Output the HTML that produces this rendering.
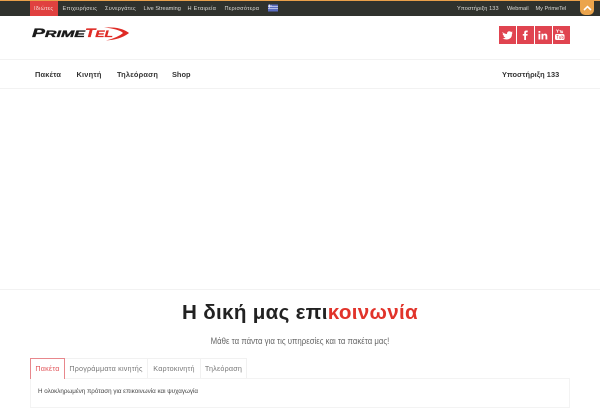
<!DOCTYPE html>
<html lang="el">
<head>
<meta charset="utf-8">
<title>PrimeTel</title>
<style>
html,body{margin:0;padding:0;background:#fff}
body{width:600px;height:400px;position:relative;overflow:hidden;font-family:"Liberation Sans","DejaVu Sans",sans-serif}
.a{position:absolute;white-space:nowrap}
.top{left:0;top:0;width:600px;height:15.5px;background:#30322d;border-top:1px solid #e9a04a;box-sizing:border-box}
.t{top:1.5px;height:14px;line-height:14px;font-size:5.6px;letter-spacing:.25px;color:#dcdcd8}
.n{top:68.5px;line-height:12px;font-size:7.4px;font-weight:bold;letter-spacing:.2px;color:#333}
.s{top:26px;width:17.2px;height:18px;background:#e04450}
.l{left:0;width:600px;height:1px;background:#f2f2f2}
.tab{top:358px;height:20px;line-height:20px;font-size:7.2px;color:#777;text-align:center;box-sizing:border-box;border:1px solid #f1f1f1;border-bottom:0;border-left:0;letter-spacing:.2px}
</style>
</head>
<body>
<div class="a top"></div>
<div class="a" style="left:30px;top:1px;width:28px;height:14.5px;background:#e0413f"></div>
<div class="a t" style="left:34px;color:#f6dcd8">Ιδιώτες</div>
<div class="a t" style="left:62.5px">Επιχειρήσεις</div>
<div class="a t" style="left:105px">Συνεργάτες</div>
<div class="a t" style="left:143.5px;letter-spacing:0">Live Streaming</div>
<div class="a t" style="left:187.5px">Η Εταιρεία</div>
<div class="a t" style="left:224.5px">Περισσότερα</div>
<svg class="a" style="left:268px;top:4px" width="10" height="8" viewBox="0 0 10 8"><rect width="10" height="7" y=".5" fill="#5a6cc0"/><rect y="2" width="10" height=".8" fill="#c9cfee"/><rect y="4" width="10" height=".8" fill="#c9cfee"/><rect x="1" y=".5" width="1" height="3" fill="#e4e7f7"/><rect y="1.6" width="4" height=".8" fill="#e4e7f7"/></svg>
<div class="a t" style="left:457px;letter-spacing:.1px">Υποστήριξη 133</div>
<div class="a t" style="left:507px;letter-spacing:0">Webmail</div>
<div class="a t" style="left:535.5px;letter-spacing:0">My PrimeTel</div>
<div class="a" style="left:580px;top:0;width:14px;height:14.5px;background:#eba44c;border-radius:0 0 5px 5px"></div>
<svg class="a" style="left:582.5px;top:4.5px" width="9" height="6" viewBox="0 0 9 6"><path d="M1 5 L4.500 1.600 L8 5" fill="none" stroke="#fff" stroke-width="1.600"/></svg>

<svg class="a" style="left:30px;top:25px" width="100" height="17" viewBox="0 0 100 17">
<text x="2" y="12" font-family="Liberation Sans" font-weight="bold" font-style="italic" fill="#1b1b1b" stroke="#1b1b1b" stroke-width=".35" textLength="53" lengthAdjust="spacingAndGlyphs"><tspan font-size="11.500">P</tspan><tspan font-size="9.500">RIME</tspan></text>
<text x="55" y="12" font-family="Liberation Sans" font-weight="bold" font-style="italic" fill="#df2b25" stroke="#df2b25" stroke-width=".3" textLength="28" lengthAdjust="spacingAndGlyphs"><tspan font-size="11.500">T</tspan><tspan font-size="9.500">EL</tspan></text>
<path d="M74 2.500 Q91 1.500 99 8 Q91 14.500 76 15.500 Q88 12.500 93 8 Q89 4 74 2.500Z" fill="#df2b25"/>
</svg>

<div class="a s" style="left:498.500px"></div>
<div class="a s" style="left:516.500px"></div>
<div class="a s" style="left:534.500px"></div>
<div class="a s" style="left:552.500px"></div>
<svg class="a" style="left:498px;top:26px" width="72" height="18" viewBox="0 0 72 18">
<path d="M4.500 6 Q6.500 8 9 8 Q9 5.200 11.500 5.200 Q12.700 5.200 13 6 L14.500 5.500 L13.800 6.900 L14.800 6.700 L14 7.800 Q14 13.500 8.500 13.500 Q6 13.500 4.300 12.300 Q6.300 12.500 7.500 11.400 Q5.800 11.200 5.400 9.900 L6.300 9.800 Q4.700 9.200 4.700 7.700 L5.600 7.900 Q4.200 7 4.500 6Z" fill="#fff"/>
<path d="M26.200 14 V9.600 H24.800 V8 H26.200 V6.600 Q26.200 4.500 28.400 4.500 H29.700 V6.200 H28.800 Q28 6.200 28 7 V8 H29.700 L29.400 9.600 H28 V14Z" fill="#fff"/>
<path d="M40.500 7.800 H42.300 V13.500 H40.500Z M40.500 5 H42.300 V6.700 H40.500Z M43.500 7.800 H45.300 V8.600 Q45.900 7.600 47.200 7.600 Q49.300 7.600 49.300 10 V13.500 H47.500 V10.400 Q47.500 9.100 46.500 9.100 Q45.300 9.100 45.300 10.500 V13.500 H43.500Z" fill="#fff"/>
<path d="M58.500 3.500 L59.500 5.500 L60.500 3.500 M59.500 5.500 V6.800 M61.500 4.600 H62.500 V6.800 M63.500 4.600 V6.800 H64.700 V4.600" fill="none" stroke="#fff" stroke-width=".7"/>
<rect x="57" y="8" width="9.500" height="6" rx="1.500" fill="#fff"/>
<path d="M58.500 9.300 H60.500 M59.500 9.300 V12.800 M61.500 10.200 V12.500 H62.800 V10.200 M64 9 V12.500 H65.300 V10.500 H64" fill="none" stroke="#e04450" stroke-width=".5"/>
</svg>

<div class="a l" style="top:59px"></div>
<div class="a l" style="top:88px"></div>
<div class="a n" style="left:35px">Πακέτα</div>
<div class="a n" style="left:76.500px">Κινητή</div>
<div class="a n" style="left:117px">Τηλεόραση</div>
<div class="a n" style="left:172px;letter-spacing:0">Shop</div>
<div class="a n" style="left:502px;letter-spacing:.05px">Υποστήριξη 133</div>

<div class="a l" style="top:289px"></div>
<div class="a" style="left:0;width:600px;top:299px;line-height:28px;text-align:center;font-size:20.600px;font-weight:bold;color:#222;letter-spacing:.3px">Η δική μας επι<span style="color:#e1332a">κοινωνία</span></div>
<div class="a" style="left:0;width:600px;top:333.500px;line-height:14px;text-align:center;font-size:9.300px;color:#666;transform:scaleX(.84)">Μάθε τα πάντα για τις υπηρεσίες και τα πακέτα μας!</div>

<div class="a" style="left:30px;top:378px;width:540px;height:30px;border:1px solid #f3f3f3;box-sizing:border-box"></div>
<div class="a tab" style="left:30px;top:358px;width:35px;height:21px;background:#fff;border:1px solid #e8878c;border-bottom:0;color:#e2555a">Πακέτα</div>
<div class="a tab" style="left:65px;width:83px">Προγράμματα κινητής</div>
<div class="a tab" style="left:148px;width:53px">Καρτοκινητή</div>
<div class="a tab" style="left:201px;width:46px">Τηλεόραση</div>
<div class="a" style="left:38px;top:386px;line-height:12px;font-size:6.250px;color:#444">Η ολοκληρωμένη πρόταση για επικοινωνία και ψυχαγωγία</div>
</body>
</html>
